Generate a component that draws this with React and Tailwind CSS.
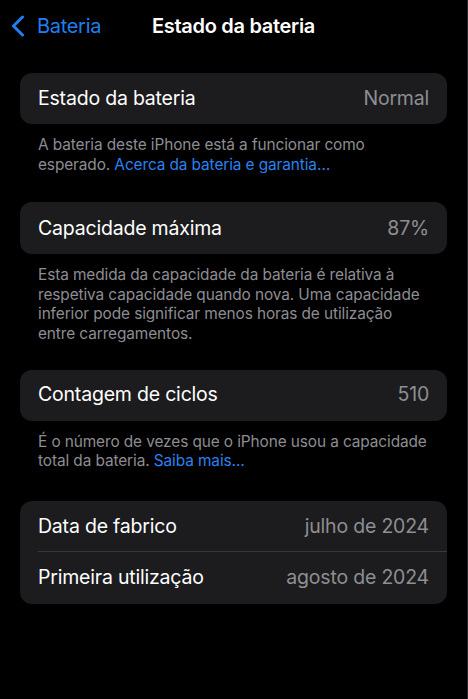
import React from "react";

const font = { fontFamily: "Inter, 'Noto Sans', sans-serif" };

function Card({ children }) {
  return (
    <div className="mx-5 rounded-[12px] bg-[#1c1c1e] overflow-hidden">{children}</div>
  );
}

function Row({ label, value, divider, h = "h-[51px]" }) {
  return (
    <div className={`relative flex ${h} items-center justify-between pl-[18px] pr-[18px]`}>
      <span className="text-[19.5px] text-white tracking-[-0.2px]">{label}</span>
      <span className="text-[19.5px] text-[#8e8e93] tracking-[-0.2px]">{value}</span>
      {divider && (
        <div className="absolute bottom-0 left-[18px] right-0 h-px bg-[#38383a]" />
      )}
    </div>
  );
}

function Footer({ children }) {
  return (
    <p className="mx-5 px-[18px] pt-[11px] text-[15.4px] leading-[19.6px] text-[#8d8d92] tracking-[-0.1px]">
      {children}
    </p>
  );
}

export default function App() {
  return (
    <div className="min-h-[699px] w-[468px] bg-black border-r border-[#262628]" style={font}>
      <div className="relative flex h-[52px] items-center">
        <div className="flex items-center pl-[11px] gap-[12px]">
          <svg width="14" height="22" viewBox="0 0 14 22" fill="none">
            <path d="M11.5 2 L2.5 11 L11.5 20" stroke="#1f7ff0" strokeWidth="3" strokeLinecap="round" strokeLinejoin="round" />
          </svg>
          <span className="text-[20px] text-[#1f7ff0] tracking-[-0.3px]">Bateria</span>
        </div>
        <span className="absolute left-[152px] text-[20px] font-semibold text-white tracking-[-0.3px]">
          Estado da bateria
        </span>
      </div>

      <div className="pt-[21px]">
        <Card>
          <Row label="Estado da bateria" value="Normal" />
        </Card>
        <Footer>
          A bateria deste iPhone está a funcionar como esperado.{" "}
          <span className="text-[#2a82f0]">Acerca da bateria e garantia…</span>
        </Footer>
      </div>

      <div className="pt-[28px]">
        <Card>
          <Row label="Capacidade máxima" value="87%" h="h-[52px]" />
        </Card>
        <Footer>
          Esta medida da capacidade da bateria é relativa à respetiva capacidade quando nova. Uma capacidade inferior pode significar menos horas de utilização entre carregamentos.
        </Footer>
      </div>

      <div className="pt-[26px]">
        <Card>
          <Row label="Contagem de ciclos" value="510" />
        </Card>
        <Footer>
          É o número de vezes que o iPhone usou a capacidade total da bateria.{" "}
          <span className="text-[#2a82f0]">Saiba mais…</span>
        </Footer>
      </div>

      <div className="pt-[30px]">
        <Card>
          <Row label="Data de fabrico" value="julho de 2024" divider />
          <Row label="Primeira utilização" value="agosto de 2024" h="h-[52px]" />
        </Card>
      </div>
    </div>
  );
}
